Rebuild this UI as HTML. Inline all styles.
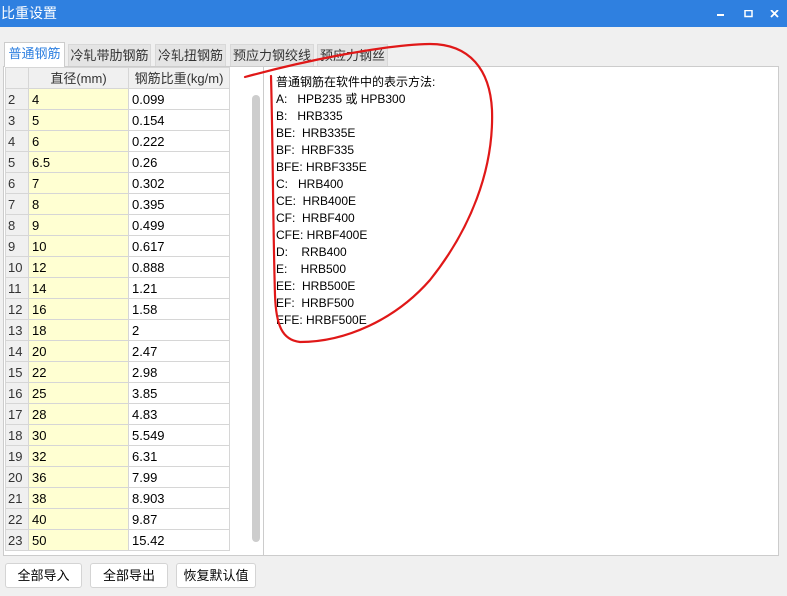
<!DOCTYPE html>
<html><head><meta charset="utf-8"><style>
*{margin:0;padding:0;box-sizing:border-box}
body{width:787px;height:596px;background:#f0f0f0;font-family:"Liberation Sans","Noto Sans CJK SC",sans-serif;font-size:12px;color:#000;position:relative;overflow:hidden}
.title{position:absolute;left:0;top:0;width:787px;height:27px;background:#2f80e0;color:#fff;font-size:14px;line-height:27px;padding-left:1px}
.tab{position:absolute;top:44px;height:22px;background:#e4e4e4;border:1px solid #d8d8d8;border-bottom:none;color:#333;font-size:13px;line-height:21px;text-align:center}
.tab.act{top:42px;height:25px;background:#fff;color:#2f80e0;border-color:#ccc;z-index:2}
.left{position:absolute;left:3px;top:66px;width:261px;height:490px;background:#fff;border:1px solid #ccc}
.right{position:absolute;left:263px;top:66px;width:516px;height:490px;background:#fff;border:1px solid #ccc}
table{position:absolute;left:1px;top:0;border-collapse:collapse}
td{height:21px;border:1px solid #d6d6d6;font-size:13px;padding-left:3px;line-height:19px}
td.n{width:23px;background:#f0f0f0;color:#333;padding-left:2px}
td.d{width:100px;background:#ffffd2}
td.w{width:101px}
tr.h td{background:#f0f0f0;text-align:center;color:#333;padding-left:0}
.sb{position:absolute;left:248px;top:28px;width:8px;height:447px;background:#cdcdcd;border-radius:4px}
.txt{position:absolute;left:12px;top:7px;font-size:12px;line-height:17px}
.btn{position:absolute;top:563px;height:25px;background:#fff;border:1px solid #d4d4d4;border-radius:3px;font-size:13px;line-height:23px;text-align:center}
</style></head><body>
<div class="title">比重设置</div>
<svg style="position:absolute;left:715px;top:10px" width="65" height="10"><rect x="2" y="4" width="7" height="2" fill="#fff"/><rect x="30" y="0.5" width="7" height="6" fill="none" stroke="#fff" stroke-width="1.5"/><path d="M56 0L63 7M63 0L56 7" stroke="#fff" stroke-width="1.8"/></svg>
<div class="tab act" style="left:4px;width:61px">普通钢筋</div>
<div class="tab" style="left:68px;width:83px">冷轧带肋钢筋</div>
<div class="tab" style="left:155px;width:71px">冷轧扭钢筋</div>
<div class="tab" style="left:230px;width:84px">预应力钢绞线</div>
<div class="tab" style="left:317px;width:71px">预应力钢丝</div>
<div class="left">
<table>
<tr class="h"><td class="n"></td><td class="d" style="background:#f0f0f0">直径(mm)</td><td class="w">钢筋比重(kg/m)</td></tr>
<tr><td class="n">2</td><td class="d">4</td><td class="w">0.099</td></tr>
<tr><td class="n">3</td><td class="d">5</td><td class="w">0.154</td></tr>
<tr><td class="n">4</td><td class="d">6</td><td class="w">0.222</td></tr>
<tr><td class="n">5</td><td class="d">6.5</td><td class="w">0.26</td></tr>
<tr><td class="n">6</td><td class="d">7</td><td class="w">0.302</td></tr>
<tr><td class="n">7</td><td class="d">8</td><td class="w">0.395</td></tr>
<tr><td class="n">8</td><td class="d">9</td><td class="w">0.499</td></tr>
<tr><td class="n">9</td><td class="d">10</td><td class="w">0.617</td></tr>
<tr><td class="n">10</td><td class="d">12</td><td class="w">0.888</td></tr>
<tr><td class="n">11</td><td class="d">14</td><td class="w">1.21</td></tr>
<tr><td class="n">12</td><td class="d">16</td><td class="w">1.58</td></tr>
<tr><td class="n">13</td><td class="d">18</td><td class="w">2</td></tr>
<tr><td class="n">14</td><td class="d">20</td><td class="w">2.47</td></tr>
<tr><td class="n">15</td><td class="d">22</td><td class="w">2.98</td></tr>
<tr><td class="n">16</td><td class="d">25</td><td class="w">3.85</td></tr>
<tr><td class="n">17</td><td class="d">28</td><td class="w">4.83</td></tr>
<tr><td class="n">18</td><td class="d">30</td><td class="w">5.549</td></tr>
<tr><td class="n">19</td><td class="d">32</td><td class="w">6.31</td></tr>
<tr><td class="n">20</td><td class="d">36</td><td class="w">7.99</td></tr>
<tr><td class="n">21</td><td class="d">38</td><td class="w">8.903</td></tr>
<tr><td class="n">22</td><td class="d">40</td><td class="w">9.87</td></tr>
<tr><td class="n">23</td><td class="d">50</td><td class="w">15.42</td></tr>
</table>
<div class="sb"></div>
</div>
<div class="right"><div class="txt">
普通钢筋在软件中的表示方法:<br>A:&nbsp;&nbsp;&nbsp;HPB235 或 HPB300<br>B:&nbsp;&nbsp;&nbsp;HRB335<br>BE:&nbsp;&nbsp;HRB335E<br>BF:&nbsp;&nbsp;HRBF335<br>BFE: HRBF335E<br>C:&nbsp;&nbsp;&nbsp;HRB400<br>CE:&nbsp;&nbsp;HRB400E<br>CF:&nbsp;&nbsp;HRBF400<br>CFE: HRBF400E<br>D:&nbsp;&nbsp;&nbsp;&nbsp;RRB400<br>E:&nbsp;&nbsp;&nbsp;&nbsp;HRB500<br>EE:&nbsp;&nbsp;HRB500E<br>EF:&nbsp;&nbsp;HRBF500<br>EFE: HRBF500E
</div></div>
<svg style="position:absolute;left:0;top:0" width="787" height="596"><path d="M245 77 C300 62 380 45 430 44 C470 44 490 70 492 110 C494 170 470 230 430 280 C395 320 345 342 300 342 C282 340 276 325 275 295 C273 230 273 150 271 76" fill="none" stroke="#e01818" stroke-width="2.2" stroke-linecap="round"/></svg>
<div class="btn" style="left:5px;width:77px">全部导入</div>
<div class="btn" style="left:90px;width:78px">全部导出</div>
<div class="btn" style="left:176px;width:80px">恢复默认值</div>
</body></html>
